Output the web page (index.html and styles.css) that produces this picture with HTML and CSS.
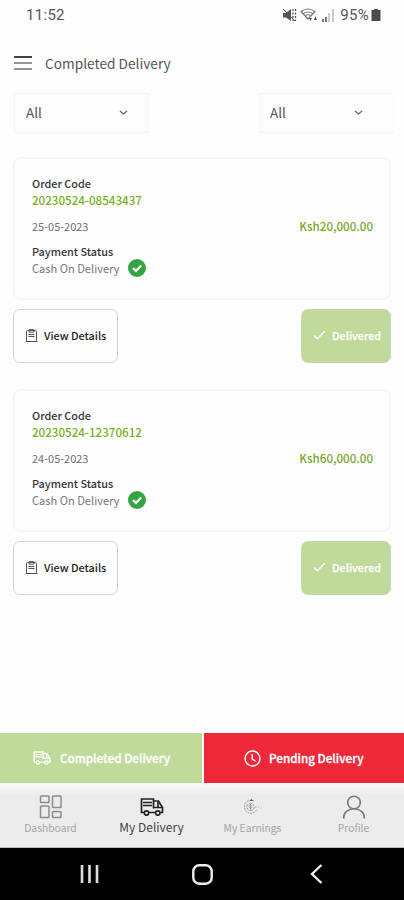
FILE: index.html
```
<!DOCTYPE html>
<html lang="en">
<head>
<meta charset="utf-8">
<title>Completed Delivery</title>
<link rel="stylesheet" href="styles.css">
</head>
<body>
<svg class="defs" width="0" height="0">
  <symbol id="clip" viewBox="0 0 13 13"><g fill="none" stroke="#555" stroke-width="1"><rect x="1.500" y="1.500" width="10" height="11" rx="1"/><path d="M4 1.500V.6h5v2.600H4V1.500M3.500 5.500h6M3.500 7.500h6M.5 12.500h12"/></g></symbol>
  <symbol id="tick" viewBox="0 0 13 10"><path d="M1 5.500 4.300 8.800 12 1" fill="none" stroke="#fff" stroke-width="1.300"/></symbol>
  <symbol id="ok" viewBox="0 0 18 18"><circle cx="9" cy="9" r="9" fill="#34a340"/><path d="M5 9.100 8 12l5.200-5.400" fill="none" stroke="#fff" stroke-width="2.200"/></symbol>
  <symbol id="truck" viewBox="0 0 24 18"><g fill="none" stroke="currentColor" stroke-width="1.700"><path d="M4 14.500H1.500V1H13.500v9.500M9 14.500h6M13.500 3h5l4 6.500v5h-2"/><path d="M13.500 9.500H22M18 4v5M3 4.500h9M3 7.500h9"/><circle cx="6.500" cy="15" r="2.200"/><circle cx="17.800" cy="15" r="2.200"/></g></symbol>
</svg>
<div class="status">
  <span class="time">11:52</span>
  <div class="signals">
    <svg width="15" height="14" viewBox="0 0 15 14"><path d="M1 5h3l5-4v12L4 9.500H1z" fill="#555"/><path d="M1 1l12 12" stroke="#555"/><path d="M11 1v12M13.500 1v12" stroke="#555" stroke-width="1.300" stroke-dasharray="2 1.500"/></svg>
    <svg width="18" height="14" viewBox="0 0 18 14"><g fill="none" stroke="#777" stroke-width="1.200"><path d="M1 3.500Q8 -1.500 15 3.500L8 11Z"/><path d="M3.500 5.500Q8 2.500 12.500 5.500M5.500 7.500Q8 6 10.500 7.500"/></g><path d="M9 10h3l-1.500 3zM14 12h3l-1.500-4z" fill="#555"/></svg>
    <svg width="13" height="13" viewBox="0 0 13 13"><path d="M1 10h2v3H1zM4 8h2v5H4z" fill="#777"/><path d="M7 4h2v9H7zM11 0h2v13h-2z" fill="#ccc"/></svg>
    <span class="pct">95%</span>
    <svg width="10" height="12" viewBox="0 0 10 12"><path d="M3 0h4v1h2.500v11h-9V1H3z" fill="#4c4c4c"/></svg>
  </div>
</div>
<header class="head">
  <div class="burger"><i></i><i></i><i></i></div>
  <h1>Completed Delivery</h1>
</header>
<div class="filters">
  <div class="select"><span>All</span><svg width="9" height="6" viewBox="0 0 9 6"><path d="M1 1l3.500 3L8 1" fill="none" stroke="#666" stroke-width="1.300"/></svg></div>
  <div class="select right"><span>All</span><svg width="9" height="6" viewBox="0 0 9 6"><path d="M1 1l3.500 3L8 1" fill="none" stroke="#666" stroke-width="1.300"/></svg></div>
</div>
<main>
  <section class="order">
    <div class="card">
      <div class="label">Order Code</div>
      <div class="code">20230524-08543437</div>
      <div class="row"><span class="date">25-05-2023</span><span class="price">Ksh20,000.00</span></div>
      <div class="label">Payment Status</div>
      <div class="pay"><span>Cash On Delivery</span><svg width="18" height="18"><use href="#ok"/></svg></div>
    </div>
    <div class="actions">
      <div class="btn view"><svg width="13" height="13"><use href="#clip"/></svg><span>View Details</span></div>
      <div class="btn done"><svg width="13" height="10"><use href="#tick"/></svg><span>Delivered</span></div>
    </div>
  </section>
  <section class="order">
    <div class="card">
      <div class="label">Order Code</div>
      <div class="code">20230524-12370612</div>
      <div class="row"><span class="date">24-05-2023</span><span class="price">Ksh60,000.00</span></div>
      <div class="label">Payment Status</div>
      <div class="pay"><span>Cash On Delivery</span><svg width="18" height="18"><use href="#ok"/></svg></div>
    </div>
    <div class="actions">
      <div class="btn view"><svg width="13" height="13"><use href="#clip"/></svg><span>View Details</span></div>
      <div class="btn done"><svg width="13" height="10"><use href="#tick"/></svg><span>Delivered</span></div>
    </div>
  </section>
</main>
<div class="tabs">
  <div class="tab green"><svg width="18" height="14"><use href="#truck"/></svg><span>Completed Delivery</span></div>
  <div class="tab red"><svg width="17" height="17" viewBox="0 0 17 17"><g fill="none" stroke="#fff" stroke-width="1.500"><circle cx="8.500" cy="8.500" r="7.500"/><path d="M8.200 4v5l3.300 2.200"/></g></svg><span>Pending Delivery</span></div>
</div>
<nav class="nav">
  <div class="item"><div class="ico"><svg width="24" height="24" viewBox="0 0 24 24"><g fill="none" stroke="#8c8c8c" stroke-width="1.500"><rect x="1.500" y="1" width="8.500" height="6.500" rx=".8"/><rect x="13.500" y="1" width="8.500" height="11.500" rx=".8"/><rect x="1.500" y="11" width="8.500" height="11.500" rx=".8"/><rect x="13.500" y="16.500" width="8.500" height="6" rx=".8"/></g></svg></div><span>Dashboard</span></div>
  <div class="item active"><div class="ico"><svg width="24" height="18"><use href="#truck"/></svg></div><span>My Delivery</span></div>
  <div class="item"><div class="ico"><svg width="20" height="18" viewBox="0 0 20 18"><g fill="none" stroke="#999"><path d="M11 3a6.500 6.500 0 1 0 2.500 9" stroke-dasharray="2 .8"/><circle cx="7.500" cy="9" r="3.700" stroke-dasharray="3 .8"/><path d="M7.500 6v6M9 8q-3-1.500-3 .3T9 10"/><path d="M12 9h2M15 9h1M17.500 10h1" stroke="#b5b5b5"/></g><path d="M7 3h3L8.500 1z" fill="#555"/></svg></div><span>My Earnings</span></div>
  <div class="item"><div class="ico"><svg width="24" height="24" viewBox="0 0 24 24"><g fill="none" stroke="#777" stroke-width="1.600"><circle cx="12" cy="7.500" r="6.300"/><path d="M1.800 23.500v-1.500a10.200 8.200 0 0 1 20.400 0v1.500"/></g></svg></div><span>Profile</span></div>
</nav>
<div class="system">
  <svg width="20" height="20" viewBox="0 0 20 20"><path d="M2 1v18M9.500 1v18M17 1v18" stroke="#ddd" stroke-width="2.600"/></svg>
  <svg width="21" height="21" viewBox="0 0 21 21"><rect x="1.300" y="1.300" width="18.400" height="18.400" rx="6" fill="none" stroke="#eee" stroke-width="2.400"/></svg>
  <svg width="13" height="20" viewBox="0 0 13 20"><path d="M11.500 1 2 10l9.500 9" fill="none" stroke="#eee" stroke-width="2.400"/></svg>
</div>
</body>
</html>
```
FILE: styles.css
```
* { box-sizing: border-box; }
body { margin: 0; width: 404px; height: 900px; overflow: hidden; background: #fefefe; color: #555; font-family: "Noto Sans CJK SC", sans-serif; display: flex; flex-direction: column; }
svg { display: block; flex: none; }
.defs { position: absolute; }
.status { height: 30px; padding: 0 23px 0 26px; display: flex; justify-content: space-between; align-items: center; font-family: Roboto, sans-serif; color: #555; }
.time { font-size: 15px; letter-spacing: .3px; }
.signals { display: flex; align-items: center; margin-left: auto; }
.signals svg + svg { margin-left: 3px; }
.pct { font-size: 15px; letter-spacing: .3px; margin: 0 2px 0 6px; }
.signals .pct + svg { margin: 0; }
.head { height: 63px; padding: 3px 14px 0; display: flex; align-items: center; gap: 13px; }
.burger { width: 18px; display: flex; flex-direction: column; gap: 4px; }
.burger i { height: 2px; background: #959595; }
.burger i:first-child { background: #444; }
h1 { margin: 0; font-size: 13.700px; line-height: 20px; font-weight: 400; color: #555; }
.filters { height: 40px; padding: 0 10px 0 14px; display: flex; justify-content: space-between; }
.select { width: 134px; border: 1px solid #f3f3f3; padding: 0 19px 2px 11px; display: flex; justify-content: space-between; align-items: center; font-size: 13.500px; line-height: 20px; }
.select.right { padding: 0 30px 2px 9px; border-right-color: #fafafa; }
.select svg { margin-top: 2px; }
main { flex: 1; padding: 24px 13px 0; }
.order { height: 232px; }
.card { height: 143px; border: 2px solid #f7f7f7; border-radius: 8px; padding: 16px 16px 0 17px; }
.label { font-size: 10.850px; line-height: 16px; color: #333; font-weight: 500; }
.code { font-size: 11.600px; line-height: 16px; padding-top: 1px; color: #78b023; font-weight: 500; }
.row { height: 35px; display: flex; justify-content: space-between; align-items: center; }
.date { font-size: 11px; line-height: 16px; color: #707070; }
.price { font-size: 11.600px; line-height: 16px; color: #78a82c; font-weight: 500; }
.pay { height: 17px; display: flex; align-items: center; gap: 8px; font-size: 11.100px; line-height: 16px; color: #777; }
.actions { margin-top: 9px; display: flex; justify-content: space-between; }
.btn { height: 54px; border-radius: 7px; display: flex; align-items: center; font-size: 10.800px; font-weight: 500; line-height: 16px; }
.view { width: 105px; border: 1px solid #d4d4d4; padding: 0 0 2px 11px; gap: 6px; color: #222; }
.done { width: 90px; border: 1px solid #cbd8bd; background: #c0da9c; color: #fff; padding: 0 0 2px 11px; gap: 6px; }
.done span { -webkit-text-stroke: .25px #fff; }
.tabs { height: 50px; display: flex; gap: 2px; }
.tab { display: flex; align-items: center; color: #fff; font-size: 11.700px; font-weight: 500; }
.tab span { -webkit-text-stroke: .3px #fff; margin-bottom: 1px; }
.green { width: 202px; background: #c0da9c; padding-left: 33px; gap: 9px; }
.red { width: 200px; background: #ee2839; padding-left: 40px; gap: 8px; }
.nav { height: 65px; padding-top: 12px; border-bottom: 1px solid #bbb; background: linear-gradient(#fafafa, #ececec 12px, #ececec); display: flex; }
.item { flex: 1; display: flex; flex-direction: column; align-items: center; font-size: 10.300px; line-height: 18px; color: #a5a5a5; }
.ico { height: 24px; display: flex; align-items: center; }
.active { font-size: 12px; line-height: 16px; color: #444; }
.active .ico { color: #222; }
.system { height: 52px; background: #000; display: flex; align-items: center; padding-left: 80px; }
.system svg:nth-child(2) { margin-left: 92px; }
.system svg:nth-child(3) { margin-left: 97px; }
```
